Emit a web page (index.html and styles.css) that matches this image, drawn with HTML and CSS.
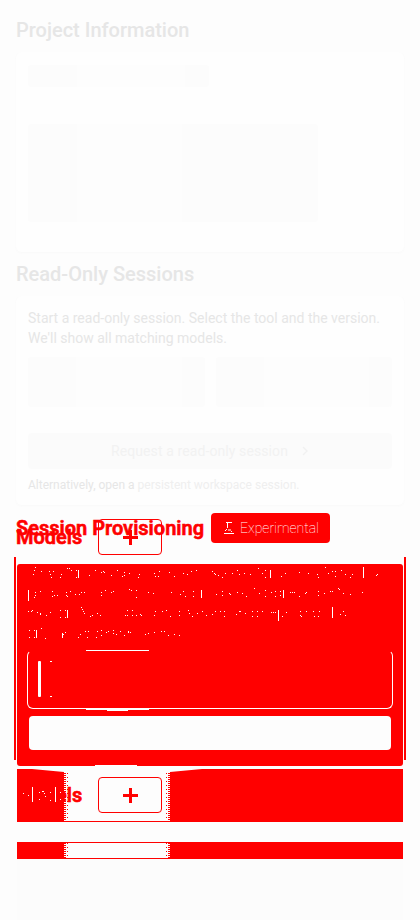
FILE: index.html
```html
<!DOCTYPE html>
<html lang="en">
<head>
<meta charset="utf-8">
<title>Project</title>
<link rel="stylesheet" href="styles.css">
</head>
<body>
<main class="page">
  <h2>Project Information</h2>
  <section class="card info">
    <div class="skeleton title-skeleton"></div>
    <div class="skeleton body-skeleton"></div>
  </section>
  <h2 class="readonly-title">Read-Only Sessions</h2>
  <section class="card readonly">
    <p>Start a read-only session. Select the tool and the version. We'll show all matching models.</p>
    <div class="fields"><div class="skeleton"></div><div class="skeleton"></div></div>
    <div class="request"><span>Request a read-only session</span><svg width="7" height="10" viewBox="0 0 7 10"><path d="M1 1l4 4-4 4"/></svg></div>
    <div class="alternative">Alternatively, open a <span>persistent workspace session.</span></div>
  </section>
  <div class="provision-head">
    <h2>Session Provisioning</h2>
    <div class="badge"><svg width="12" height="14" viewBox="0 0 12 14"><path d="M3 1.500h6M4.500 2v5M2 10l2-2M5 9h3M8 10l1 1M1 12.500h10"/></svg><span>Experimental</span></div>
    <div class="ghost-head"><h2>Models</h2><div class="add"><i></i></div></div>
  </div>
  <section class="provision">
    <svg class="marks" width="364" height="80" viewBox="0 0 364 80" shape-rendering="crispEdges"><path id="marks"/></svg>
    <div class="slot"><i></i><b></b></div>
    <div class="provision-button"></div>
  </section>
  <section class="models">
    <div class="models-band"><h2>Models</h2><div class="add"><i></i></div>
      <svg class="flecks" width="50" height="16" viewBox="0 0 50 16" shape-rendering="crispEdges"><path d="M15 0h1v15h-1zM38 0h1v15h-1zM6 6h1v1h-1zM11 8h1v1h-1zM22 5h1v1h-1zM22 12h1v1h-1zM25 4h2v1h-2zM27 6h1v1h-1zM28 9h1v1h-1zM33 5h1v1h-1zM33 13h1v1h-1zM43 5h1v1h-1zM43 12h1v1h-1z"/></svg>
    </div>
    <div class="band-gap"></div>
    <div class="thin-band"></div>
    <div class="last-skeleton"></div>
  </section>
</main>
<script src="marks.js"></script>
</body>
</html>
```
FILE: marks.js
```js
// Speck coordinates in thirds of a pixel, grouped by the offset of each part.
const groups = [
  [12, 15, "34,16 31,25 28,37 52,28 76,28 88,28 79,37 82,46 112,37 109,46 130,19 136,19 142,25 157,25 157,46 196,40 214,25 232,31 238,28 241,31 262,40 280,25 295,43 301,31 301,40 316,34 343,46 346,37 49,88 34,91 34,100 31,106 85,88 85,103 91,100 100,100 139,88 127,91 127,100 130,103 154,97 166,97 172,91 181,91 232,91 232,100 244,85 262,91 268,88 316,82 322,85 337,85 337,106 13,148 22,148 25,145 40,151 49,154 49,157 67,160 79,151 109,145 109,166 124,145 124,166 172,136 175,142 178,148 181,154 199,163 205,160 220,154 229,160 304,160 310,145 310,160 325,145 325,160 337,160 349,157 352,160 16,205 16,226 31,205 31,226 52,199 64,229 118,216 124,211 163,226 169,217 184,208 193,208 190,226 217,226 220,208 232,205 232,220 247,211 253,208 268,205 268,214 277,217 289,208 301,220 313,208 313,211 319,211"],
  [84, 186, "463,205 466,214 475,214 478,199 508,202 523,214 550,205 562,208 574,199 589,196 445,262 460,265 514,262 541,268 550,259 556,274 580,259 580,274 466,319 463,331 487,319 499,316 511,334 538,319 538,331 565,316 568,325 577,334 592,325 607,319 619,331 436,388 445,385 463,382 484,379 493,379 505,391 523,388 538,391"],
  [-546, 186, "7,199 15,208 13,205 24,211 37,217 46,205 66,205 81,196 87,208 102,205 120,208 145,190 157,205 166,196 166,217 214,214 226,205 268,202 295,205 322,208 325,217 346,187 355,205 367,199 376,199 376,214 394,196 406,208 421,217 427,208 499,211 502,208 19,268 37,259 37,271 58,265 60,268 82,262 97,265 109,274 133,250 148,265 166,256 166,274 184,262 196,259 196,274 211,259 211,271 241,262 247,262 253,262 268,274 286,265 289,262 325,259 325,271 343,265 361,259 367,259 385,250 388,253 400,265 421,268 457,262 7,328 16,319 31,319 43,319 43,334 79,328 88,319 91,319 106,325 127,319 127,334 142,319 142,334 157,319 184,322 190,322 196,322 217,334 229,322 271,319 289,319 271,331 274,334 310,319 328,319 313,334 325,334 391,328 400,319 406,331"]
];
let d = "";
for (const [ox, oy, list] of groups) {
  for (const point of list.split(" ")) {
    const [x, y] = point.split(",").map(Number);
    d += `M${Math.floor((x - ox) / 3)} ${Math.floor((y - oy) / 3)}h1v1h-1z`;
  }
}
const stems = [[50, 3, 8], [0, 23, 11], [39, 43, 8], [8, 63, 8], [34, 66, 5], [173, 23, 8], [242, 3, 8], [335, 0, 11], [255, 23, 8], [250, 43, 11], [304, 40, 11]];
for (const [x, y, h] of stems) d += `M${x} ${y}h1v${h}h-1z`;
document.getElementById("marks").setAttribute("d", d);
```
FILE: styles.css
```css
* { box-sizing: border-box; }
body { margin: 0; background: #fdfdfd; font-family: Roboto, sans-serif; color: #e6e6e6; }
.page { height: 920px; padding: 16px 16px 0; overflow: hidden; }
h2 { margin: 0; font-size: 20px; line-height: 28px; font-weight: 500; white-space: nowrap; }
.card { background: #fefefe; border-radius: 6px; box-shadow: 0 1px 3px #f9f9f9; padding: 12px; }
.info { height: 200px; margin-top: 8px; padding-top: 13px; }
.skeleton { border-radius: 3px; background: linear-gradient(90deg, #fcfcfc 0 27%, #fdfdfd 27% 87%, #fcfcfc 87%); }
.title-skeleton { width: 181px; height: 22px; }
.body-skeleton { width: 290px; height: 98px; margin-top: 37px; background: linear-gradient(90deg, #fcfcfc 0 17%, #fdfdfd 17% 53%, #fcfcfc 53%); }
.readonly-title { margin-top: 8px; }
.readonly { margin-top: 8px; height: 209px; }
.readonly p { margin: 0; font-size: 14px; line-height: 20px; }
.fields { display: grid; grid-template-columns: 1fr 1fr; gap: 11px; margin-top: 9px; height: 50px; }
.request { height: 36px; margin-top: 26px; display: flex; align-items: center; justify-content: center; gap: 14px; background: #fbfbfb; border-radius: 4px; font-size: 14px; color: #f2f2f2; letter-spacing: .1px; }
.request path { fill: none; stroke: #f1f1f1; stroke-width: 1.4; }
.alternative { margin-top: 8px; font-size: 12px; line-height: 16px; }
.alternative span { color: #efefef; }
.provision-head { position: relative; display: flex; gap: 7px; height: 30px; margin-top: 8px; color: #f00; }
.provision-head h2 { line-height: 30px; }
.provision-head h2, .models-band h2 { font-weight: 600; -webkit-text-stroke: .6px #f00; }
.badge { width: 119px; height: 30px; border-radius: 4px; background: #f00; display: flex; align-items: center; padding-left: 12px; gap: 5px; font-size: 14px; font-weight: 100; color: white; }
.badge path { fill: none; stroke: white; stroke-width: 1; }
.ghost-head { position: absolute; left: 0; top: 6px; display: flex; gap: 15px; }
.ghost-head h2 { line-height: 36px; width: 67px; }
.add { width: 64px; height: 36px; border: 1px solid #f00; border-radius: 4px; display: grid; place-items: center; }
.add i { width: 15px; height: 15px; background: linear-gradient(#f00, #f00) center / 15px 3px no-repeat, linear-gradient(#f00, #f00) center / 3px 15px no-repeat; }
.provision { position: relative; margin: 21px 1px 0; height: 202px; padding: 3px 11px 0; background: #f00; border-radius: 3px; }
.provision::before { content: ""; position: absolute; left: -3px; right: -3px; top: -7px; height: 203px; border: solid #f00; border-width: 0 2px; }
.provision::after { content: ""; position: absolute; left: 27px; right: 27px; bottom: 0; height: 1px; background: linear-gradient(white, white) 51px 0 / 42px 1px no-repeat; }
.marks { display: block; }
.marks path, .flecks path { fill: white; }
.slot { position: relative; height: 59px; margin: 3px -1px 0; border: 1px solid white; border-top-color: #f00; border-radius: 6px; display: flex; padding: 10px; gap: 9px; }
.slot::before { content: ""; position: absolute; left: 58px; top: -1px; width: 63px; height: 1px; background: white; }
.slot::after { content: ""; position: absolute; left: 58px; bottom: -3px; width: 63px; height: 2px; background: linear-gradient(white, white) 0 0 / 63px 1px no-repeat, linear-gradient(white, white) 50% 1px / 21px 1px no-repeat; }
.slot i { width: 3px; height: 36px; background: white; border-radius: 1px; }
.slot b { height: 36px; width: 3px; background: linear-gradient(white, white) 0 0 / 2px 1px no-repeat, linear-gradient(white, white) 0 100% / 2px 1px no-repeat; }
.provision-button { height: 34px; margin: 7px 1px 0; border-radius: 4px; background: #fdfdfd; }
.models { margin: 3px 1px 0; color: #f00; }
.models-band, .thin-band { background: repeating-linear-gradient(#f00 0 1px, transparent 1px 2px) 47px 0 / 2px 100% no-repeat, repeating-linear-gradient(#f00 0 1px, transparent 1px 4px) 50px 0 / 1px 100% no-repeat, repeating-linear-gradient(#f00 0 1px, transparent 1px 2px) 151px 0 / 2px 100% no-repeat, repeating-linear-gradient(#f00 0 1px, transparent 1px 4px) 149px 0 / 1px 100% no-repeat, linear-gradient(90deg, #f00 0 47px, #fdfdfd 47px 153px, #f00 153px); border-bottom: 1px solid #f00; }
.models-band { position: relative; height: 53px; padding: 8px 0 0; display: flex; gap: 15px; clip-path: polygon(0 0, 15px 0, 47px 3px, 153px 3px, 185px 0, 100% 0, 100% 100%, 0 100%); }
.models-band h2 { width: 67px; margin-left: -1px; line-height: 36px; }
.flecks { position: absolute; left: 0; top: 18px; }
.band-gap { height: 20px; }
.thin-band { height: 17px; border-top: 1px solid #f00; }
.last-skeleton { height: 61px; background: #fcfcfc; }
```
